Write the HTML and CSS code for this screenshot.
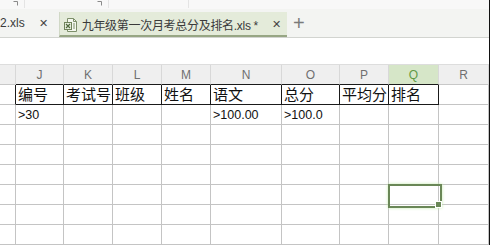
FILE: index.html
```html
<!DOCTYPE html>
<html lang="zh">
<head>
    <meta charset="UTF-8">
    <title>九年级第一次月考总分及排名.xls</title>
    <link rel="stylesheet" href="styles.css">
</head>
<body>
    <div class="screen">
        <div class="topstrip">
            <svg class="tick" width="5" height="5" viewBox="0 0 5 5"><path d="M0.5 0.5h4v4" fill="none" stroke="#8a8a8a"/></svg>
            <span class="sep"></span>
            <svg class="tick" width="5" height="5" viewBox="0 0 5 5"><path d="M0.5 0.5h4v4" fill="none" stroke="#8a8a8a"/></svg>
            <span class="sep"></span>
            <span class="sep"></span>
        </div>

        <div class="tabbar">
            <div class="tab">
                <span class="tab-name">2.xls</span>
                <span class="tab-close">&#x2715;</span>
            </div>
            <div class="tab active">
                <svg class="file-icon" width="14" height="14" viewBox="0 0 14 14">
                    <path d="M3.5 0.5h6l3 3v10h-9z" fill="#f4f7ef" stroke="#7d8f6a"/>
                    <path d="M9.5 0.5v3h3" fill="none" stroke="#7d8f6a"/>
                    <rect x="0.5" y="4.5" width="7" height="7" fill="#e9efe0" stroke="#6f845b"/>
                    <path d="M2 6l4 4M6 6l-4 4" stroke="#4f6a3c" stroke-width="1.2"/>
                    <path d="M9 6h2M9 8h2M9 10h2" stroke="#7d8f6a"/>
                </svg>
                <span class="tab-name">九年级第一次月考总分及排名.xls *</span>
                <span class="tab-close">&#x2715;</span>
            </div>
            <span class="tab-add">+</span>
        </div>

        <div class="formula"></div>

        <div class="sheet">
            <!-- column headers -->
            <div class="hd"></div>
            <div class="hd edge">J</div>
            <div class="hd edge">K</div>
            <div class="hd edge">L</div>
            <div class="hd edge">M</div>
            <div class="hd edge">N</div>
            <div class="hd edge">O</div>
            <div class="hd edge">P</div>
            <div class="hd edge sel">Q</div>
            <div class="hd">R</div>

            <!-- row 1 -->
            <div class="c boxl"></div>
            <div class="c box">编号</div>
            <div class="c box">考试号</div>
            <div class="c box">班级</div>
            <div class="c box">姓名</div>
            <div class="c box">语文</div>
            <div class="c box">总分</div>
            <div class="c box">平均分</div>
            <div class="c box">排名</div>
            <div class="c"></div>

            <!-- row 2 -->
            <div class="c"></div>
            <div class="c num">&gt;30</div>
            <div class="c"></div>
            <div class="c"></div>
            <div class="c"></div>
            <div class="c num">&gt;100.00</div>
            <div class="c num">&gt;100.0</div>
            <div class="c"></div>
            <div class="c"></div>
            <div class="c"></div>

            <!-- rows 3-8 -->
            <div class="c"></div><div class="c"></div><div class="c"></div><div class="c"></div><div class="c"></div>
            <div class="c"></div><div class="c"></div><div class="c"></div><div class="c"></div><div class="c"></div>

            <div class="c"></div><div class="c"></div><div class="c"></div><div class="c"></div><div class="c"></div>
            <div class="c"></div><div class="c"></div><div class="c"></div><div class="c"></div><div class="c"></div>

            <div class="c"></div><div class="c"></div><div class="c"></div><div class="c"></div><div class="c"></div>
            <div class="c"></div><div class="c"></div><div class="c"></div><div class="c"></div><div class="c"></div>

            <div class="c"></div><div class="c"></div><div class="c"></div><div class="c"></div><div class="c"></div>
            <div class="c"></div><div class="c"></div><div class="c"></div>
            <div class="c active-cell"><span class="handle"></span></div>
            <div class="c"></div>

            <div class="c"></div><div class="c"></div><div class="c"></div><div class="c"></div><div class="c"></div>
            <div class="c"></div><div class="c"></div><div class="c"></div><div class="c"></div><div class="c"></div>

            <div class="c"></div><div class="c"></div><div class="c"></div><div class="c"></div><div class="c"></div>
            <div class="c"></div><div class="c"></div><div class="c"></div><div class="c"></div><div class="c"></div>
        </div>
    </div>
</body>
</html>
```

FILE: styles.css
```css
body {
    margin: 0;
    background: #ffffff;
    font-family: "Liberation Sans", "Noto Sans CJK SC", sans-serif;
    overflow: hidden;
}
.screen {
    width: 489px;
    height: 245px;
    border-right: 1px solid #111111;
    overflow: hidden;
}
.topstrip {
    height: 9px;
    background: #f8f8f8;
    display: flex;
    align-items: flex-start;
}
.tick {
    margin: 1px 0 0 13px;
}
.tick + .sep {
    margin-left: 6px;
}
.sep {
    width: 1px;
    height: 8px;
    background: #e4e4e4;
}
.sep + .tick {
    margin-left: 72px;
}
.sep + .sep {
    margin-left: 79px;
}
.tabbar {
    height: 28px;
    background: #f3f4f2;
    border-bottom: 1px solid #d2d4d0;
    display: flex;
    align-items: stretch;
    font-size: 12px;
    color: #3a3a3a;
}
.tab {
    display: flex;
    align-items: center;
    padding: 0 8px 0 0;
}
.tab.active {
    margin-left: 3px;
    padding: 2px 6px 0 4px;
    background: #e4ebda;
    border-left: 1px solid #d0d8c6;
    border-bottom: 2px solid #97a684;
    margin-top: 3px;
}
.file-icon {
    margin-right: 4px;
}
.tab-close {
    margin-left: 14px;
    font-size: 11px;
    color: #444444;
}
.tab.active .tab-name {
    letter-spacing: -0.3px;
}
.tab-add {
    font-size: 20px;
    font-weight: 300;
    color: #7a7a7a;
    align-self: center;
    margin-left: 6px;
}
.formula {
    height: 26px;
    border-bottom: 1px solid #dddddd;
}
.sheet {
    display: grid;
    grid-template-columns: 16px 48px 49px 49px 49px 71px 58px 49px 50px 50px;
    grid-auto-rows: 20px;
}
.hd {
    box-sizing: border-box;
    background: #efefef;
    border-right: 1px solid #d8d8d8;
    border-bottom: 1px solid #c8c8c8;
    color: #707070;
    font-size: 12px;
    display: flex;
    align-items: center;
    justify-content: center;
}
.hd.edge {
    border-bottom-color: #1a1a1a;
}
.hd.sel {
    background: #d6e6c8;
    color: #5f9a45;
}
.c {
    box-sizing: border-box;
    border-right: 1px solid #c4c4c4;
    border-bottom: 1px solid #c4c4c4;
    font-size: 15px;
    color: #111111;
    display: flex;
    align-items: flex-end;
    padding: 0 0 0 2px;
    line-height: 18px;
    white-space: nowrap;
    overflow: hidden;
}
.c.boxl {
    border-right-color: #1a1a1a;
}
.c.box {
    border-right-color: #1a1a1a;
    border-bottom-color: #1a1a1a;
}
.c.num {
    font-size: 12.5px;
    align-items: center;
}
.c.active-cell {
    position: relative;
    overflow: visible;
}
.active-cell::before {
    content: "";
    position: absolute;
    left: -1px;
    top: -1px;
    width: 50px;
    height: 20px;
    border: 2px solid #6a8757;
    box-shadow: 0 0 3px #c6ecb0;
}
.handle {
    position: absolute;
    right: -4px;
    bottom: -4px;
    width: 5px;
    height: 5px;
    background: #6a8757;
    border: 1px solid #ffffff;
}
```
